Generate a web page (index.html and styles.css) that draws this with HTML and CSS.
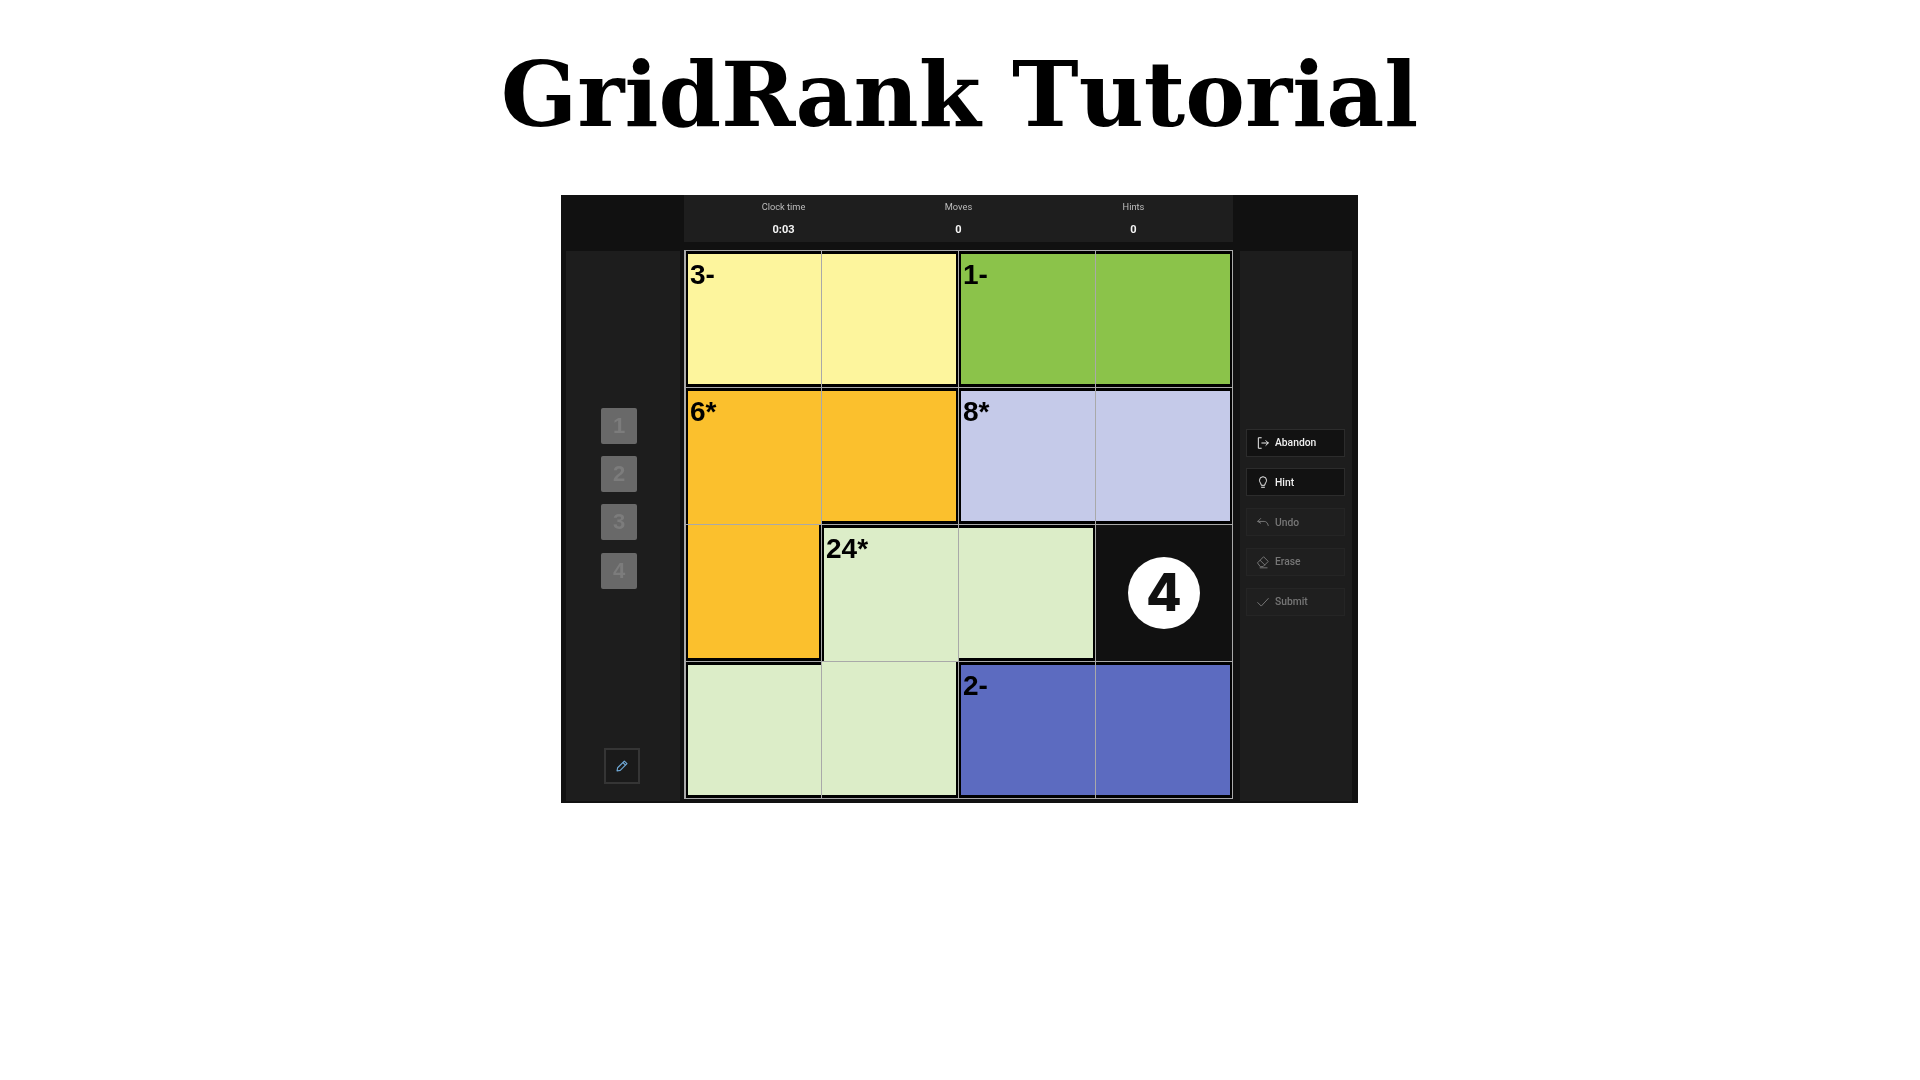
FILE: index.html
```html
<!DOCTYPE html>
<html lang="en">
<head>
<meta charset="utf-8">
<title>GridRank Tutorial</title>
<link rel="stylesheet" href="styles.css">
</head>
<body>
<h1 class="title">GridRank Tutorial</h1>
<main class="frame">
  <div class="corner"></div>
  <div class="stats">
    <div class="stat"><span class="stat-label">Clock time</span><span class="stat-value">0:03</span></div>
    <div class="stat"><span class="stat-label">Moves</span><span class="stat-value">0</span></div>
    <div class="stat"><span class="stat-label">Hints</span><span class="stat-value">0</span></div>
  </div>
  <div class="corner"></div>

  <aside class="panel panel-left">
    <div class="tile">1</div>
    <div class="tile">2</div>
    <div class="tile">3</div>
    <div class="tile">4</div>
    <button class="pencil" aria-label="Pencil">
      <svg viewBox="0 0 24 24" width="14" height="14" fill="none" stroke="#6fa8d6" stroke-width="2" stroke-linejoin="round"><path d="M16 3.500l4.500 4.500L9 19.500l-5.500 1 1-5.500z"/><path d="M13.500 6l4.500 4.500"/></svg>
    </button>
  </aside>

  <section class="board">
    <div class="cell yellow bt bl bb"><span class="clue">3-</span></div>
    <div class="cell yellow bt br bb"></div>
    <div class="cell green bt bl bb"><span class="clue">1-</span></div>
    <div class="cell green bt br bb"></div>

    <div class="cell orange bt bl"><span class="clue">6*</span></div>
    <div class="cell orange bt br bb"></div>
    <div class="cell lavender bt bl bb"><span class="clue">8*</span></div>
    <div class="cell lavender bt br bb"></div>

    <div class="cell orange bl br bb"></div>
    <div class="cell pale bt bl"><span class="clue">24*</span></div>
    <div class="cell pale bt br bb"></div>
    <div class="cell dark"><span class="ball">4</span></div>

    <div class="cell pale bt bl bb"></div>
    <div class="cell pale br bb"></div>
    <div class="cell blue bt bl bb"><span class="clue">2-</span></div>
    <div class="cell blue bt br bb"></div>
  </section>

  <aside class="panel panel-right">
    <button class="action active">
      <svg class="icon" viewBox="0 0 24 24"><path d="M9 3H4v18h5"/><path d="M10 12h11"/><path d="M17 8l4 4-4 4"/></svg>Abandon
    </button>
    <button class="action active">
      <svg class="icon" viewBox="0 0 24 24"><path d="M9 17c0-3-3-4-3-8a6 6 0 0 1 12 0c0 4-3 5-3 8z"/><path d="M9.500 21h5"/></svg>Hint
    </button>
    <button class="action">
      <svg class="icon" viewBox="0 0 24 24"><path d="M8 6L3 11l5 3"/><path d="M3 11h11c4 0 6 3 7 7"/></svg>Undo
    </button>
    <button class="action">
      <svg class="icon" viewBox="0 0 24 24"><path d="M3 13L13 3l8 8-9 9H8z"/><path d="M7 9l8 8"/><path d="M7 22h12"/></svg>Erase
    </button>
    <button class="action">
      <svg class="icon" viewBox="0 0 24 24"><path d="M3 13l6 6L21 6"/></svg>Submit
    </button>
  </aside>
</main>
</body>
</html>
```
FILE: styles.css
```css
* { box-sizing: border-box; }

html, body { margin: 0; background: #fff; }

body { height: 1080px; padding-right: 1px; overflow: hidden; }

.title {
  margin: 0;
  padding-top: 41px;
  height: 195px;
  text-align: center;
  font: 700 89.600px/108px "DejaVu Serif", serif;
  font-kerning: none;
  color: #000;
}

.frame {
  width: 797px;
  height: 608px;
  margin: 0 auto;
  background: #111;
  display: grid;
  grid-template-columns: 123px 549px 125px;
  grid-template-rows: 47px 561px;
  font-family: Roboto, "Liberation Sans", sans-serif;
  filter: blur(0.5px);
}

.stats {
  background: #1e1e1e;
  display: grid;
  grid-template-columns: repeat(3, 175px);
  justify-content: center;
}

.stat {
  display: flex;
  flex-direction: column;
  align-items: center;
  padding-top: 6px;
}

.stat-label { font-size: 9.250px; line-height: 12px; color: #bdbdbd; }
.stat-value { margin-top: 9.500px; font-size: 11px; line-height: 13px; font-weight: 700; color: #f5f5f5; }

.panel {
  background: #1d1d1d;
  display: flex;
  flex-direction: column;
  margin-top: 9px;
  margin-bottom: 2px;
}

.panel-left {
  margin-left: 5px;
  margin-right: 4px;
  padding: 157px 0 17px 35px;
  gap: 12.200px;
}

.tile {
  width: 36px;
  height: 36px;
  border-radius: 2px;
  background: #696969;
  color: #7c7c7c;
  font: 700 22px/36px "Liberation Sans", sans-serif;
  text-align: center;
}

.pencil {
  margin-top: auto;
  margin-left: 3px;
  width: 36px;
  height: 36px;
  padding: 0;
  display: flex;
  align-items: center;
  justify-content: center;
  background: #1a1a1a;
  border: 2px solid #353535;
}

.board {
  margin-top: 8px;
  width: 549px;
  height: 549px;
  padding: 1px 1px 1px 2px;
  background: #a9a9a9;
  display: grid;
  grid-template-columns: 135px repeat(3, 136px);
  grid-template-rows: repeat(4, 136px);
  gap: 1px;
}

.cell { display: block; min-width: 0; }
.bt { border-top: 3px solid #000; }
.bb { border-bottom: 3px solid #000; }
.bl { border-left: 2px solid #000; }
.br { border-right: 2px solid #000; }

.yellow { background: #fdf59d; }
.green { background: #8bc34a; }
.orange { background: #fbc02d; }
.lavender { background: #c5cae9; }
.pale { background: #dcedc8; }
.blue { background: #5c6bc0; }

.dark {
  background: #111;
  display: flex;
  align-items: center;
  justify-content: center;
}

.clue {
  display: block;
  padding: 5px 0 0 2px;
  font: 700 28px/31px "Liberation Sans", sans-serif;
  color: #000;
}

.ball {
  width: 72px;
  height: 72px;
  border-radius: 50%;
  background: #fff;
  color: #111;
  font: 800 52px/72px Inter, sans-serif;
  text-align: center;
}

.panel-right {
  margin-left: 7px;
  margin-right: 6px;
  padding: 177.500px 0 0 6px;
  gap: 11.800px;
}

.action {
  width: 99px;
  height: 28px;
  padding: 0 0 0 9px;
  display: flex;
  align-items: center;
  gap: 5px;
  background: #1f1f1f;
  border: 1px solid #252525;
  color: #767676;
  font: 500 10.300px/13px Roboto, sans-serif;
}

.action.active {
  background: #121212;
  border-color: #2c2c2c;
  color: #f0f0f0;
}

.icon {
  width: 14px;
  height: 14px;
  flex: none;
  fill: none;
  stroke: currentColor;
  stroke-width: 1.700;
  stroke-linecap: round;
  stroke-linejoin: round;
}
```
